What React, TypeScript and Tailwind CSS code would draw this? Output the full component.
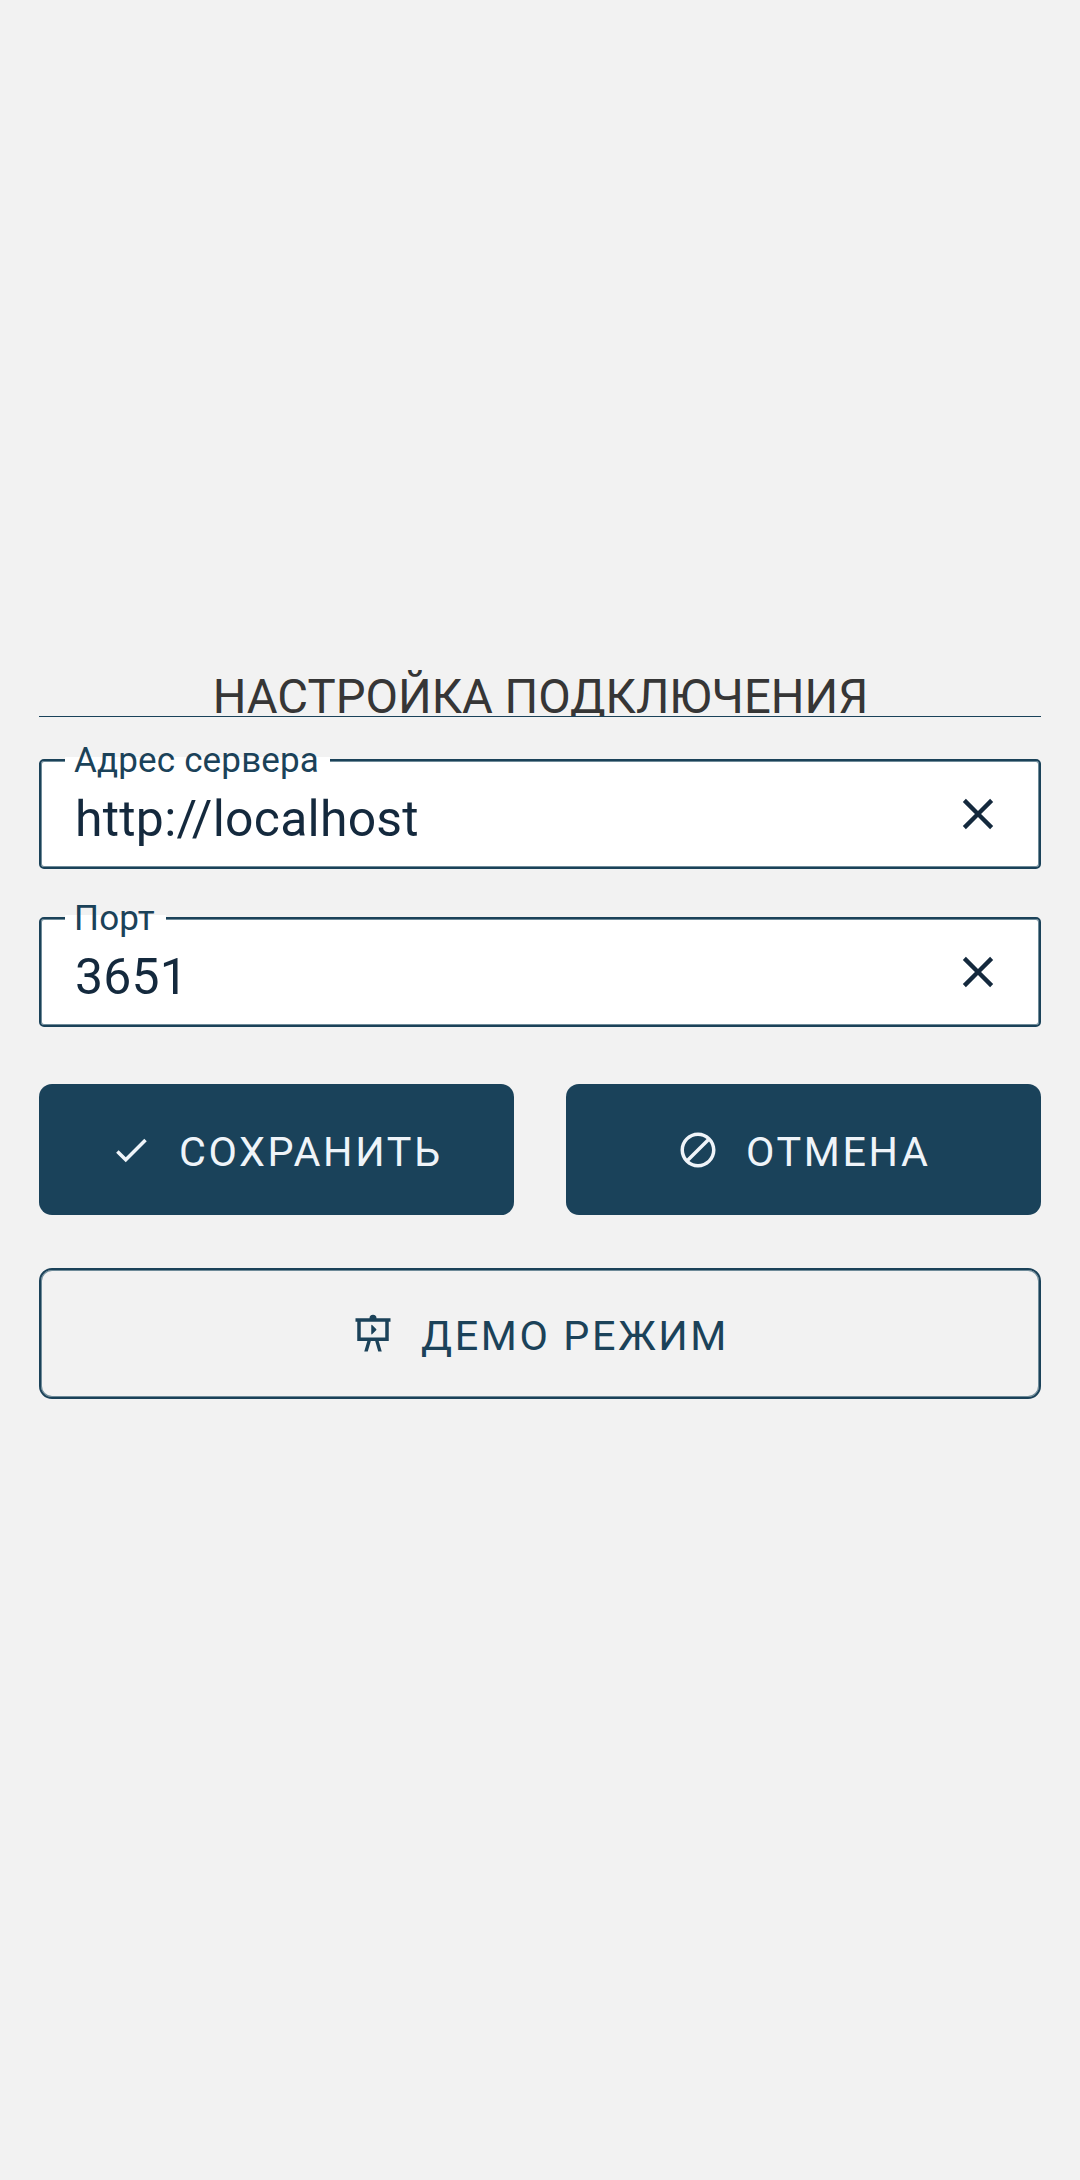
import React from "react";

const CHECK = "M21,7L9,19L3.5,13.5L4.91,12.09L9,16.17L19.59,5.59L21,7Z";
const CLOSE =
  "M19,6.41L17.59,5L12,10.59L6.41,5L5,6.41L10.59,12L5,17.59L6.41,19L12,13.41L17.59,19L19,17.59L13.41,12L19,6.41Z";
const CANCEL =
  "M12 2C17.5 2 22 6.5 22 12S17.5 22 12 22 2 17.5 2 12 6.5 2 12 2M12 4C10.1 4 8.4 4.6 7.1 5.7L18.3 16.9C19.3 15.5 20 13.8 20 12C20 7.6 16.4 4 12 4M16.9 18.3L5.7 7.1C4.6 8.4 4 10.1 4 12C4 16.4 7.6 20 12 20C13.9 20 15.6 19.4 16.9 18.3Z";
const PRESENTATION =
  "M2,3H10A2,2 0 0,1 12,1A2,2 0 0,1 14,3H22V5H21V16H15.25L17,22H15L13.25,16H10.75L9,22H7L8.75,16H3V5H2V3M5,5V14H19V5H5M11,7.2Q11,6.7 11.5,6.8L13.8,9.1Q14.2,9.5 13.8,9.9L11.5,12.2Q11,12.3 11,11.8Z";

function Icon({ path, className }: { path: string; className: string }) {
  return (
    <svg viewBox="0 0 24 24" className={`shrink-0 fill-current ${className}`} aria-hidden="true">
      <path d={path} />
    </svg>
  );
}

function Field({ label, value }: { label: string; value: string }) {
  return (
    <div className="relative flex h-[110px] items-center justify-between rounded-[5px] border-2 border-[#1b4259] bg-white pr-[35.4px] pl-[34px] text-[#14293d] shadow-[inset_0_0_0_1px_#6f8b99]">
      <span className="absolute -top-[4px] left-6 flex h-[7px] items-center bg-white pr-[11px] pl-[9px] text-[35px] leading-none tracking-[0.16px] whitespace-nowrap text-[#1b4259]">
        {label}
      </span>
      <span className="pt-[10px] text-[49.9px] leading-[60px] tracking-[0.25px]">{value}</span>
      <button aria-label="Очистить">
        <Icon path={CLOSE} className="size-[52px]" />
      </button>
    </div>
  );
}

export default function App() {
  return (
    <main className="flex min-h-[2180px] flex-col bg-[#f2f2f2] px-[39px] pt-[668px] font-[Roboto,sans-serif]">
      <h1 className="h-[49px] overflow-hidden border-b border-[#1a425a] pl-px text-center text-[47.25px] leading-[58px] whitespace-nowrap text-[#363636]">
        НАСТРОЙКА ПОДКЛЮЧЕНИЯ
      </h1>

      <div className="mt-[42px] flex flex-col gap-12">
        <Field label="Адрес сервера" value="http://localhost" />
        <Field label="Порт" value="3651" />
      </div>

      <div className="mt-[57px] grid grid-cols-2 gap-[52px] text-[41.3px] leading-[50px] tracking-[2.625px] text-[#eff4f9]">
        <button className="flex h-[131px] items-center rounded-[13px] bg-[#1a425a] pl-[71px]">
          <Icon path={CHECK} className="size-[42px]" />
          <span className="ml-[27px] pt-[4px]">СОХРАНИТЬ</span>
        </button>
        <button className="flex h-[131px] items-center rounded-[13px] bg-[#1a425a] pl-[111px]">
          <Icon path={CANCEL} className="size-[42px] -scale-x-100" />
          <span className="ml-[27px] pt-[4px]">ОТМЕНА</span>
        </button>
      </div>

      <button className="mt-[53px] flex h-[131px] items-center rounded-[13px] border-2 border-[#1b4259] pl-[311px] text-[41.3px] leading-[50px] tracking-[2.625px] text-[#1b4259] shadow-[inset_0_0_0_1px_#6f8b99]">
        <Icon path={PRESENTATION} className="size-[42px]" />
        <span className="ml-[27px] pt-[4px]">ДЕМО РЕЖИМ</span>
      </button>
    </main>
  );
}
